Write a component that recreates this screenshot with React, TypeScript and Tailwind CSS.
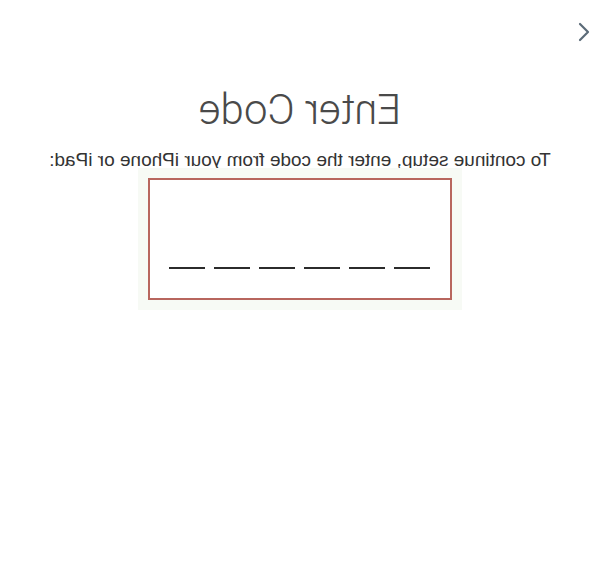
import React from 'react';

const DIGITS = 6;

function BackButton() {
  return (
    <button className="flex h-8 w-8 items-center justify-center text-[#5b6b78]">
      <svg width="14" height="22" viewBox="0 0 14 22" fill="none">
        <path d="M11 3 L3 11 L11 19" stroke="currentColor" strokeWidth="2.2" strokeLinecap="round" strokeLinejoin="round" />
      </svg>
    </button>
  );
}

function CodeBox() {
  return (
    <div className="flex h-[122px] w-[304px] items-end justify-center border-2 border-[#b8665e] bg-white pb-[29px] shadow-[0_0_0_10px_#f7faf5]">
      <div className="flex gap-[9px]">
        {Array.from({ length: DIGITS }).map((_, i) => (
          <span key={i} className="block h-[2px] w-[36px] bg-[#2b2b2b]" />
        ))}
      </div>
    </div>
  );
}

export default function App() {
  // the reference shot is mirrored horizontally, so the whole page is flipped
  return (
    <div className="h-[587px] w-[600px] -scale-x-100 bg-white font-['Liberation_Sans',Arial,sans-serif]">
      <div className="pl-[-2px] pt-[16px]">
        <BackButton />
      </div>
      <div className="flex flex-col items-center">
        <h1 className="mt-[41px] font-['Roboto',sans-serif] text-[42px] leading-none font-light text-[#4a4a4a]">
          Enter Code
        </h1>
        <p className="mt-[19px] text-[19px] leading-none text-[#333]">
          To continue setup, enter the code from your iPhone or iPad:
        </p>
        <div className="mt-[9px]">
          <CodeBox />
        </div>
      </div>
    </div>
  );
}
